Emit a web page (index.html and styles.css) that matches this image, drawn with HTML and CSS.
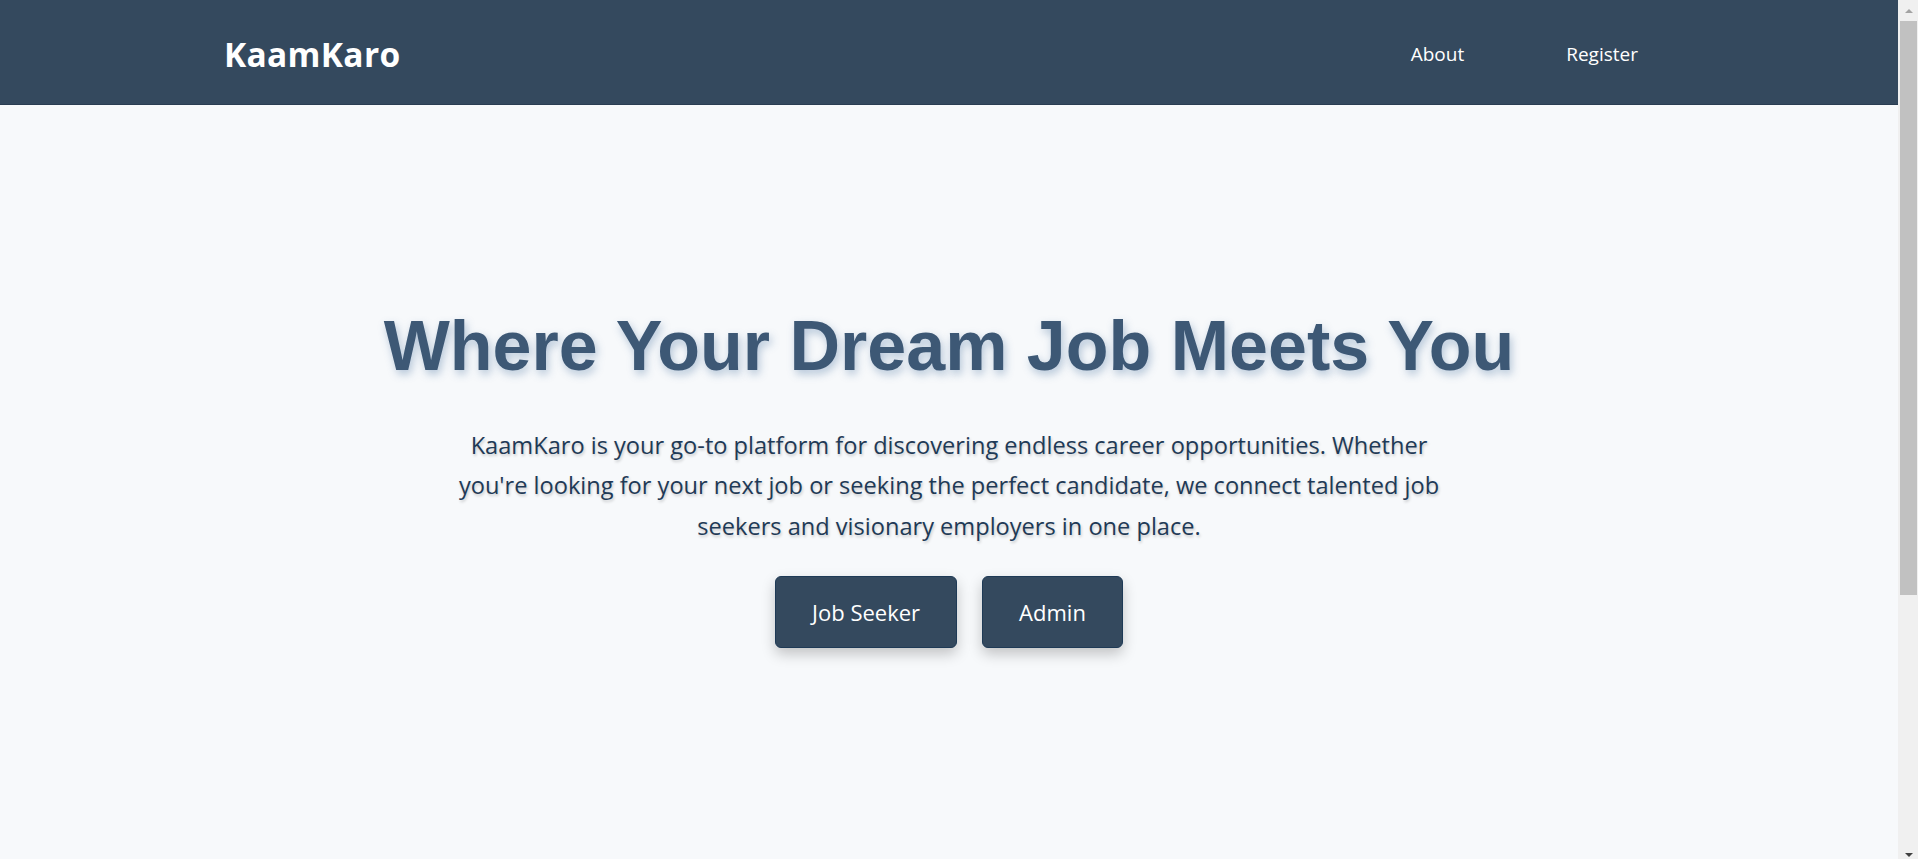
FILE: index.html
```html
<!DOCTYPE html>
<html lang="en">
<head>
<meta charset="utf-8">
<title>KaamKaro</title>
<link rel="stylesheet" href="styles.css">
</head>
<body>
<div class="page">
  <header class="navbar">
    <div class="logo">KaamKaro</div>
    <nav class="nav-links">
      <a href="#" class="nav-link">About</a>
      <a href="#" class="nav-link">Register</a>
    </nav>
  </header>
  <main>
    <section class="hero">
      <h1 class="hero-title">Where Your Dream Job Meets You</h1>
      <p class="hero-text">KaamKaro is your go-to platform for discovering endless career opportunities. Whether you're looking for your next job or seeking the perfect candidate, we connect talented job seekers and visionary employers in one place.</p>
      <div class="hero-buttons">
        <a href="#" class="btn">Job Seeker</a>
        <a href="#" class="btn">Admin</a>
      </div>
    </section>
    <section class="below"></section>
  </main>
</div>
<div class="scrollbar" aria-hidden="true">
  <div class="sb-arrow sb-up"></div>
  <div class="sb-thumb"></div>
  <div class="sb-fill"></div>
  <div class="sb-arrow sb-down"></div>
</div>
</body>
</html>
```

FILE: styles.css
```css
* { box-sizing: border-box; }
html, body { margin: 0; padding: 0; }
body {
  background: #f7f9fb;
  font-family: "Open Sans", "Noto Sans", sans-serif;
  color: #2c3e50;
}
.page {
  margin-right: 20px;
}
.navbar {
  height: 105px;
  background: #34495e;
  border-bottom: 1px solid #2a3d52;
  display: flex;
  align-items: center;
  justify-content: space-between;
  padding: 4px 260px 0 224px;
}
.logo {
  color: #ffffff;
  font-family: "Open Sans", sans-serif;
  font-weight: 700;
  font-size: 33.5px;
  letter-spacing: 0.3px;
}
.nav-links {
  display: flex;
  gap: 102px;
}
.nav-link {
  color: #ffffff;
  text-decoration: none;
  font-size: 19px;
}
.hero {
  height: calc(100vh - 105px);
  display: flex;
  flex-direction: column;
  align-items: center;
  justify-content: center;
  text-align: center;
  padding-bottom: 10px;
}
.hero-title {
  margin: 0 0 39px;
  font-family: "Liberation Sans", Arial, sans-serif;
  font-weight: 700;
  font-size: 70px;
  color: #3d5875;
  text-shadow: 2px 4px 8px rgba(52, 98, 150, 0.35);
}
.hero-text {
  margin: 0 0 30px;
  max-width: 1000px;
  font-size: 23.6px;
  line-height: 40.5px;
  color: #1f3a56;
  text-shadow: 1px 2px 3px rgba(0, 0, 0, 0.2);
}
.hero-buttons {
  display: flex;
  gap: 25px;
}
.btn {
  display: block;
  height: 72px;
  line-height: 70px;
  padding: 0 36px;
  background: #34495e;
  color: #ffffff;
  text-decoration: none;
  font-size: 22px;
  border: 1px solid #1e3a56;
  border-radius: 6px;
  box-shadow: 0 6px 14px rgba(0, 0, 0, 0.22);
}
.below {
  height: 1100px;
}
.scrollbar {
  position: fixed;
  top: 0;
  right: 0;
  width: 20px;
  height: 100vh;
  background: #f0f0f0;
  display: flex;
  flex-direction: column;
}
.sb-arrow {
  height: 21px;
  flex: none;
  display: flex;
  align-items: center;
  justify-content: center;
  padding-left: 2px;
}
.sb-down {
  align-items: flex-end;
  padding-bottom: 2px;
}
.sb-up::before {
  content: "";
  border-left: 4px solid transparent;
  border-right: 4px solid transparent;
  border-bottom: 4px solid #a3a3a3;
}
.sb-down::before {
  content: "";
  border-left: 4px solid transparent;
  border-right: 4px solid transparent;
  border-top: 4px solid #404040;
}
.sb-thumb {
  width: 17px;
  height: 574px;
  flex: none;
  background: #c1c1c1;
  margin-left: 2px;
}
.sb-fill {
  flex: 1;
}
```
